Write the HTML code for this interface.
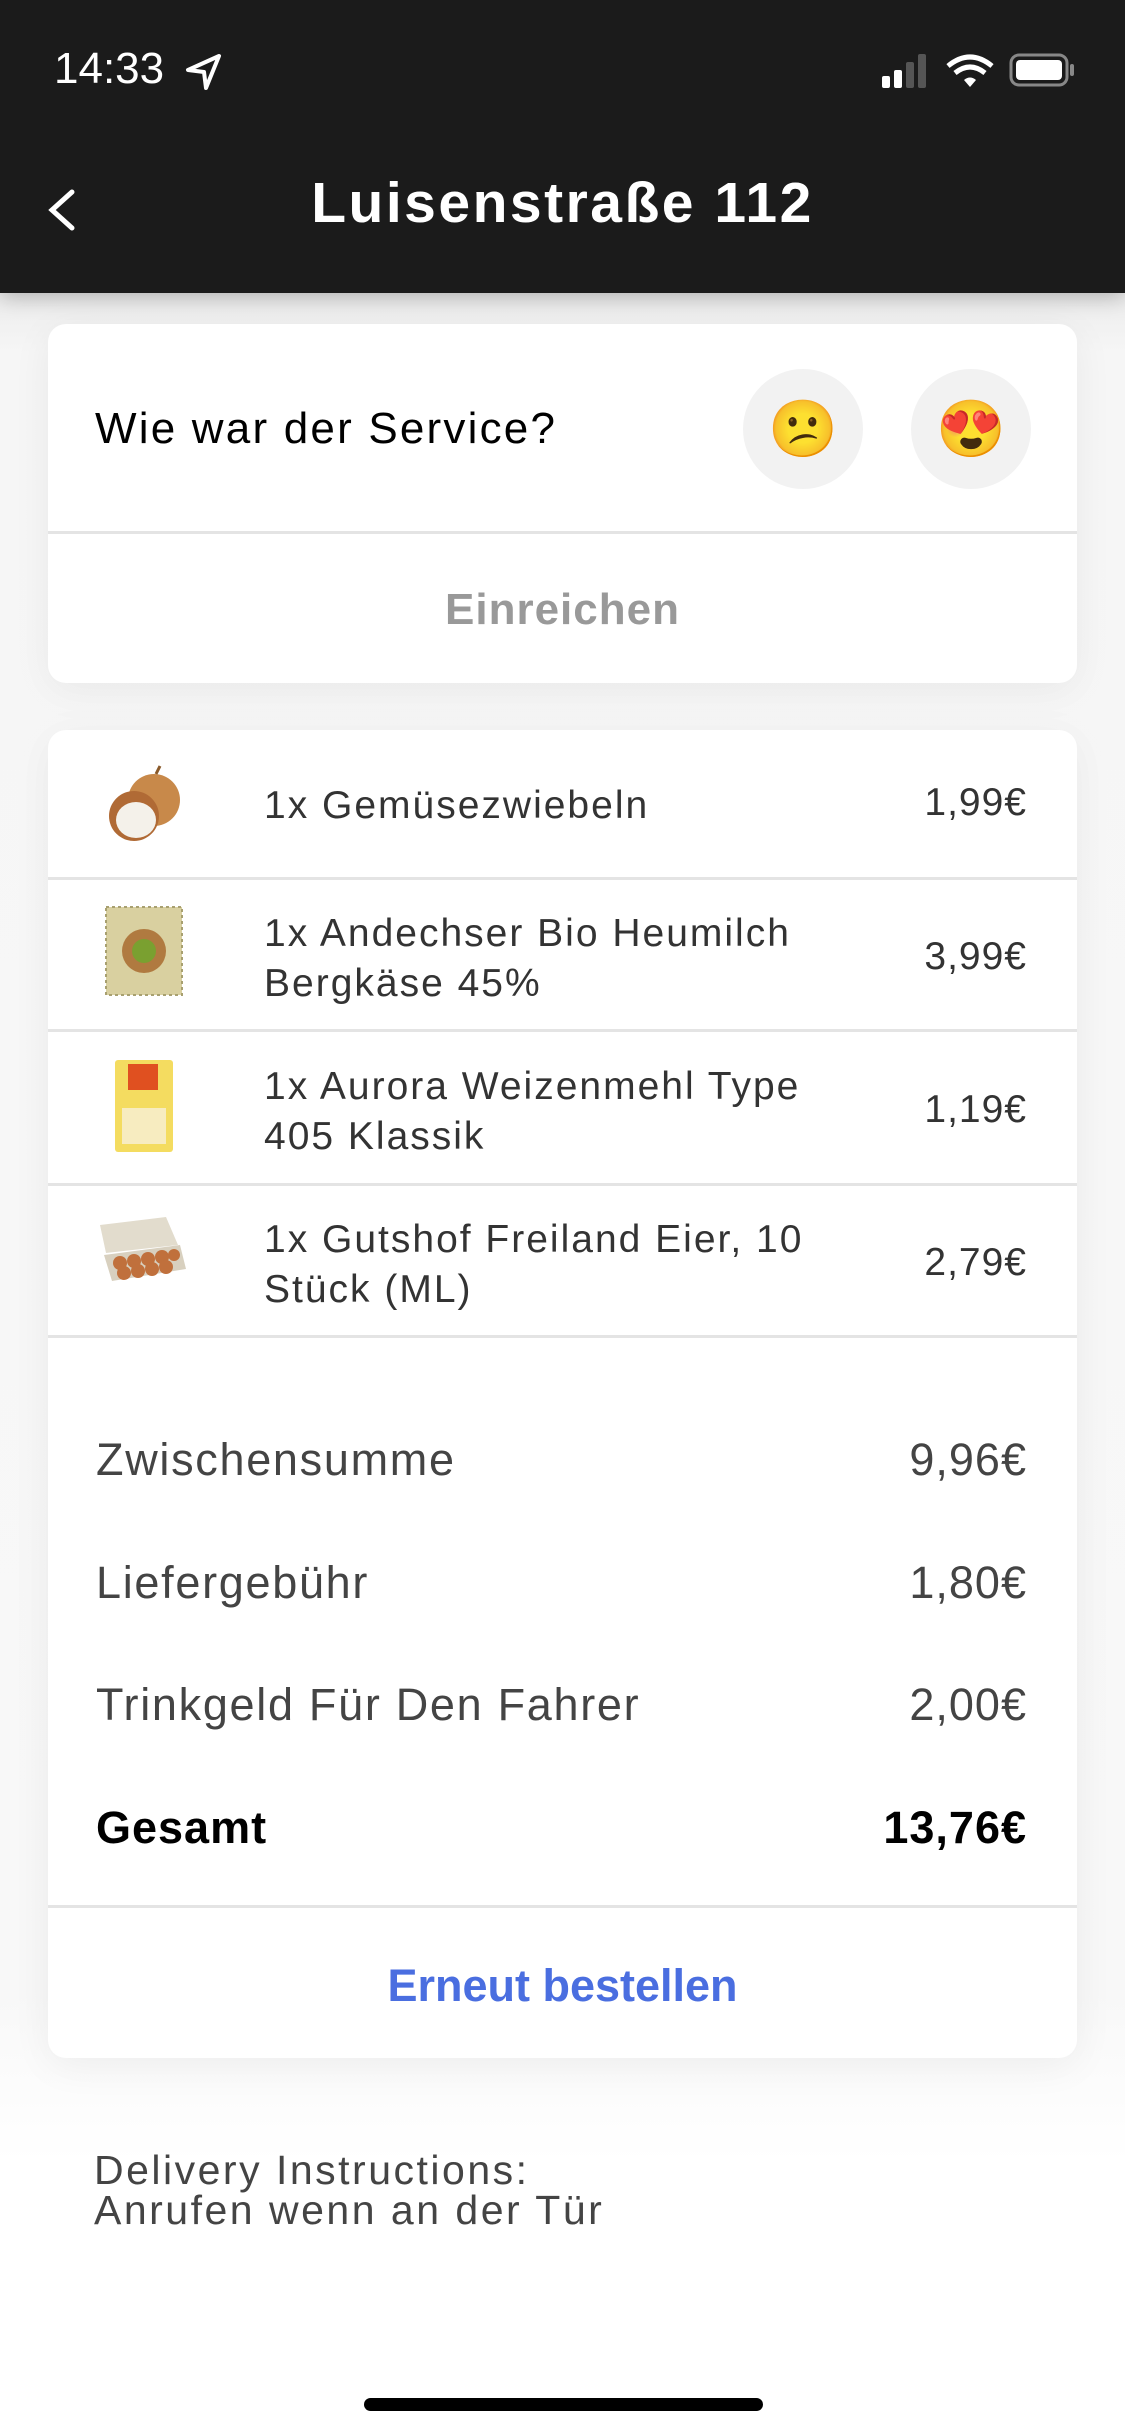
<!DOCTYPE html>
<html><head><meta charset="utf-8"><style>
*{margin:0;padding:0;box-sizing:border-box}
body{width:1125px;height:2436px;position:relative;background:#fff;font-family:"Liberation Sans",sans-serif;overflow:hidden}
.abs{position:absolute}
.bg{left:0;top:293px;width:1125px;height:1870px;background:linear-gradient(#ececec 0,#f6f6f6 60px,#f8f8f8 1700px,#fff 1870px)}
.card{background:#fff;border-radius:18px;box-shadow:0 8px 40px rgba(0,0,0,0.06)}
.t{white-space:nowrap}
.div{height:3px;background:#e4e4e4;left:48px;width:1029px}
.item{font-size:39px;color:#333;line-height:50px;left:264px;letter-spacing:2px}
.price{font-size:39px;color:#333;right:98px;letter-spacing:1px}
.sum{font-size:45px;color:#444;left:96px;letter-spacing:1.7px}
.sp{font-size:45px;color:#444;right:98px;letter-spacing:1px}
</style></head><body>
<div class="abs" style="left:0;top:0;width:1125px;height:293px;background:#1b1b1b;box-shadow:0 4px 20px rgba(0,0,0,0.25);z-index:2"></div>
<div class="abs t" style="left:54px;top:44px;font-size:44px;color:#fff;z-index:3">14:33</div>
<svg class="abs" style="left:184px;top:52px;z-index:3" width="40" height="40" viewBox="0 0 40 40"><path d="M35 4 L4 18 L20 20 L22 36 Z" fill="none" stroke="#fff" stroke-width="4" stroke-linejoin="round"/></svg>
<svg class="abs" style="left:880px;top:52px;z-index:3" width="200" height="36" viewBox="0 0 200 36">
<rect x="2" y="24" width="8" height="12" rx="2" fill="#fff"/><rect x="14" y="18" width="8" height="18" rx="2" fill="#fff"/><rect x="26" y="10" width="8" height="26" rx="2" fill="#555"/><rect x="38" y="2" width="8" height="34" rx="2" fill="#555"/>
<path d="M68 14 Q90 -4 112 14" fill="none" stroke="#fff" stroke-width="5"/><path d="M75 21 Q90 9 105 21" fill="none" stroke="#fff" stroke-width="5"/><path d="M84 28 L90 35 L96 28 Q90 23 84 28Z" fill="#fff"/>
<rect x="131" y="3" width="56" height="30" rx="8" fill="none" stroke="#888" stroke-width="3"/><rect x="136" y="8" width="46" height="20" rx="4" fill="#fff"/><rect x="190" y="12" width="4" height="12" rx="2" fill="#888"/></svg>
<svg class="abs" style="left:44px;top:188px;z-index:3" width="36" height="44" viewBox="0 0 36 44"><path d="M28 4 L8 22 L28 40" fill="none" stroke="#fff" stroke-width="5" stroke-linecap="round"/></svg>
<div class="abs t" style="left:0;width:1125px;text-align:center;top:170px;font-size:57px;font-weight:bold;color:#fff;z-index:3;letter-spacing:2.5px">Luisenstraße 112</div>

<div class="abs bg"></div>
<div class="abs card" style="left:48px;top:324px;width:1029px;height:359px"></div>
<div class="abs t" style="left:95px;top:404px;font-size:44px;color:#000;letter-spacing:2.2px">Wie war der Service?</div>
<div class="abs" style="left:743px;top:369px;width:120px;height:120px;border-radius:50%;background:#f2f2f2;text-align:center;line-height:120px;font-size:56px">😕</div>
<div class="abs" style="left:911px;top:369px;width:120px;height:120px;border-radius:50%;background:#f2f2f2;text-align:center;line-height:120px;font-size:56px">😍</div>
<div class="abs div" style="top:531px"></div>
<div class="abs t" style="left:0;width:1125px;text-align:center;top:585px;font-size:44px;font-weight:bold;color:#999;letter-spacing:1px">Einreichen</div>

<div class="abs card" style="left:48px;top:730px;width:1029px;height:1328px"></div>
<svg class="abs" style="left:96px;top:760px" width="96" height="96" viewBox="0 0 96 96"><circle cx="58" cy="40" r="26" fill="#c8894a"/><circle cx="38" cy="56" r="25" fill="#b06a35"/><ellipse cx="40" cy="60" rx="20" ry="18" fill="#f4f1ea"/><path d="M60 14 l4 -8" stroke="#8a5a2a" stroke-width="3"/></svg>
<div class="abs t item" style="top:781px">1x Gemüsezwiebeln</div>
<div class="abs t price" style="top:781px">1,99€</div>
<div class="abs div" style="top:877px"></div>
<svg class="abs" style="left:104px;top:905px" width="80" height="92" viewBox="0 0 80 92"><rect x="2" y="2" width="76" height="88" fill="#d9d0a0"/><rect x="2" y="2" width="76" height="88" fill="none" stroke="#a8a070" stroke-width="2" stroke-dasharray="3 3"/><circle cx="40" cy="46" r="22" fill="#b07a40"/><circle cx="40" cy="46" r="12" fill="#7aa030"/></svg>
<div class="abs t item" style="top:909px">1x Andechser Bio Heumilch<br>Bergkäse 45%</div>
<div class="abs t price" style="top:935px">3,99€</div>
<div class="abs div" style="top:1029px"></div>
<svg class="abs" style="left:114px;top:1058px" width="60" height="96" viewBox="0 0 60 96"><rect x="1" y="2" width="58" height="92" rx="3" fill="#f4dc60"/><rect x="14" y="6" width="30" height="26" fill="#e05020"/><rect x="8" y="50" width="44" height="36" fill="#f7ecc0"/></svg>
<div class="abs t item" style="top:1062px">1x Aurora Weizenmehl Type<br>405 Klassik</div>
<div class="abs t price" style="top:1088px">1,19€</div>
<div class="abs div" style="top:1183px"></div>
<svg class="abs" style="left:96px;top:1215px" width="96" height="70" viewBox="0 0 96 70"><path d="M4 10 L70 2 L82 30 L10 38 Z" fill="#e2dccd"/><path d="M8 40 L84 30 L90 54 L16 66 Z" fill="#d8d0bf"/><g fill="#c0703c"><circle cx="24" cy="48" r="7"/><circle cx="38" cy="46" r="7"/><circle cx="52" cy="44" r="7"/><circle cx="66" cy="42" r="7"/><circle cx="78" cy="40" r="6"/><circle cx="28" cy="58" r="7"/><circle cx="42" cy="56" r="7"/><circle cx="56" cy="54" r="7"/><circle cx="70" cy="52" r="7"/></g></svg>
<div class="abs t item" style="top:1215px">1x Gutshof Freiland Eier, 10<br>Stück (ML)</div>
<div class="abs t price" style="top:1241px">2,79€</div>
<div class="abs div" style="top:1335px"></div>

<div class="abs t sum" style="top:1434px">Zwischensumme</div><div class="abs t sp" style="top:1434px">9,96€</div>
<div class="abs t sum" style="top:1557px">Liefergebühr</div><div class="abs t sp" style="top:1557px">1,80€</div>
<div class="abs t sum" style="top:1679px">Trinkgeld Für Den Fahrer</div><div class="abs t sp" style="top:1679px">2,00€</div>
<div class="abs t sum" style="top:1802px;font-weight:bold;color:#000;letter-spacing:1px">Gesamt</div><div class="abs t sp" style="top:1802px;font-weight:bold;color:#000">13,76€</div>
<div class="abs div" style="top:1905px"></div>
<div class="abs t" style="left:0;width:1125px;text-align:center;top:1960px;font-size:45px;font-weight:bold;color:#4a6ee0">Erneut bestellen</div>

<div class="abs t" style="left:94px;top:2150px;font-size:41px;line-height:40px;color:#444;letter-spacing:2.5px">Delivery Instructions:<br>Anrufen wenn an der Tür</div>
<div class="abs" style="left:364px;top:2398px;width:399px;height:13px;border-radius:7px;background:#000"></div>
</body></html>
